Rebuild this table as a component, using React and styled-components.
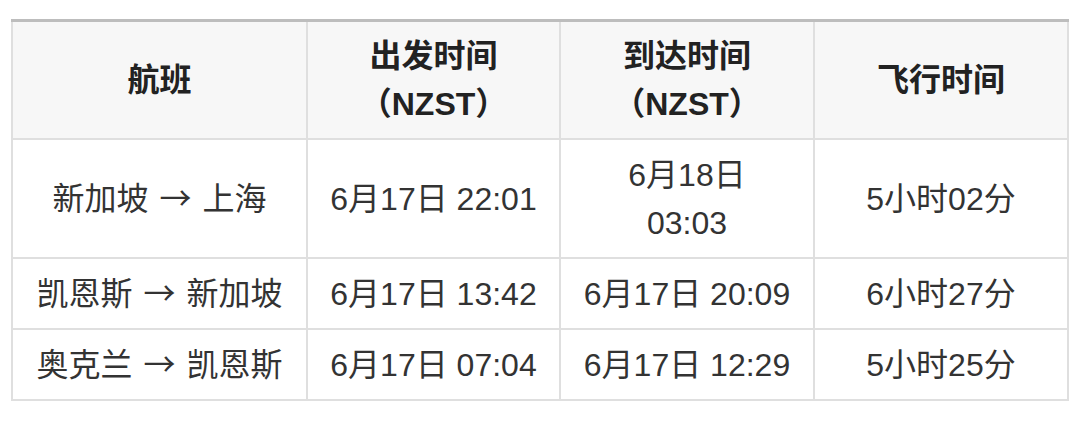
import React from 'react';
import styled, { createGlobalStyle } from 'styled-components';

const GlobalStyle = createGlobalStyle`
	body {
		margin: 0;
		background: #ffffff;
		font-family: "Liberation Sans", "Noto Sans CJK SC", sans-serif;
	}
`;

const Page = styled.div`
	padding: 19px 13px 0 11px;
`;

const Table = styled.table`
	width: 1056px;
	table-layout: fixed;
	border-collapse: collapse;
	font-size: 32px;
	line-height: 48px;
	color: #333333;
`;

const HeadCell = styled.th`
	padding: 10px 26px;
	background: #f7f7f7;
	border: 2px solid #dfdfdf;
	border-top: 3px solid #bdbdbd;
	font-weight: 700;
	color: #222222;
	text-align: center;
	vertical-align: middle;
`;

const Cell = styled.td`
	padding: 11px 20px 10px;
	border: 2px solid #dfdfdf;
	text-align: center;
	vertical-align: middle;
	white-space: pre-line;
`;

const Arrow = styled.span`
	font-family: "Noto Sans CJK SC", sans-serif;
	line-height: 1;
	margin: 0 2px;
`;

const columns = [
	{ title: '航班', width: 295 },
	{ title: '出发时间（NZST）', width: 253 },
	{ title: '到达时间（NZST）', width: 254 },
	{ title: '飞行时间', width: 254 },
];

const flights = [
	{ from: '新加坡', to: '上海', dep: '6月17日 22:01', arr: '6月18日\n03:03', dur: '5小时02分' },
	{ from: '凯恩斯', to: '新加坡', dep: '6月17日 13:42', arr: '6月17日 20:09', dur: '6小时27分' },
	{ from: '奥克兰', to: '凯恩斯', dep: '6月17日 07:04', arr: '6月17日 12:29', dur: '5小时25分' },
];

const App = () => {
	return (
		<>
			<GlobalStyle />
			<Page>
				<Table>
					<colgroup>
						{columns.map((c) => (
							<col key={c.title} style={{ width: c.width }} />
						))}
					</colgroup>
					<thead>
						<tr>
							{columns.map((c) => (
								<HeadCell key={c.title}>{c.title}</HeadCell>
							))}
						</tr>
					</thead>
					<tbody>
						{flights.map((f) => (
							<tr key={f.from}>
								<Cell>
									{f.from} <Arrow>→</Arrow> {f.to}
								</Cell>
								<Cell>{f.dep}</Cell>
								<Cell>{f.arr}</Cell>
								<Cell>{f.dur}</Cell>
							</tr>
						))}
					</tbody>
				</Table>
			</Page>
		</>
	);
};

export default App;
